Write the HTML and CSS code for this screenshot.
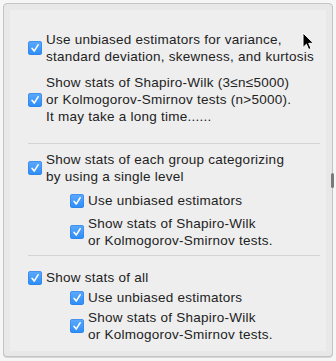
FILE: index.html
```html
<!DOCTYPE html>
<html lang="en">
  <head>
    <meta charset="UTF-8" />
    <meta name="viewport" content="width=device-width, initial-scale=1.0" />
    <title>Descriptive statistics options</title>
    <link rel="stylesheet" href="styles.css">
  </head>
  <body>
    <div class="hidden">
      <svg width="0" height="0">
        <symbol id="check" viewBox="0 0 14 14" fill="none" stroke="#fff" stroke-width="1.6" stroke-linecap="round" stroke-linejoin="round">
          <path d="M4 7.3l2.2 2.8 3.9-6.3"></path>
        </symbol>
      </svg>
    </div>

    <div class="frame">
      <div class="panel">
        <label class="option first">
          <span class="box"><svg><use xlink:href="#check"></use></svg></span>
          <span class="text">Use unbiased estimators for variance,<br>standard deviation, skewness, and kurtosis</span>
        </label>
        <label class="option second">
          <span class="box"><svg><use xlink:href="#check"></use></svg></span>
          <span class="text">Show stats of Shapiro-Wilk (3≤n≤5000)<br>or Kolmogorov-Smirnov tests (n&gt;5000).<br>It may take a long time......</span>
        </label>

        <hr class="sep sep-one">

        <label class="option">
          <span class="box"><svg><use xlink:href="#check"></use></svg></span>
          <span class="text">Show stats of each group categorizing<br>by using a single level</span>
        </label>
        <label class="option sub sub-a">
          <span class="box"><svg><use xlink:href="#check"></use></svg></span>
          <span class="text">Use unbiased estimators</span>
        </label>
        <label class="option sub sub-b">
          <span class="box"><svg><use xlink:href="#check"></use></svg></span>
          <span class="text">Show stats of Shapiro-Wilk<br>or Kolmogorov-Smirnov tests.</span>
        </label>

        <hr class="sep sep-two">

        <label class="option">
          <span class="box"><svg><use xlink:href="#check"></use></svg></span>
          <span class="text">Show stats of all</span>
        </label>
        <label class="option sub tight">
          <span class="box"><svg><use xlink:href="#check"></use></svg></span>
          <span class="text">Use unbiased estimators</span>
        </label>
        <label class="option sub tight">
          <span class="box"><svg><use xlink:href="#check"></use></svg></span>
          <span class="text">Show stats of Shapiro-Wilk<br>or Kolmogorov-Smirnov tests.</span>
        </label>
      </div>
      <span class="scroll-thumb"></span>
    </div>

    <svg class="cursor" viewBox="0 0 12 19" width="12" height="19">
      <path d="M1 1v14.5l3.4-3.3 2.3 5.3 2.3-1-2.3-5.2h4.8z" fill="#000" stroke="#fff" stroke-width="1" stroke-linejoin="round"></path>
    </svg>
  </body>
</html>
```

FILE: styles.css
```css
*,
*::before,
*::after {
  box-sizing: border-box;
  margin: 0;
  padding: 0;
}

body {
  width: 336px;
  height: 361px;
  overflow: hidden;
  background-color: #f6f6f6;
  color: #222;
  font-family: "Liberation Sans", Arial, sans-serif;
  font-size: 13.5px;
  letter-spacing: 0.25px;
  line-height: 17px;
  position: relative;
}

.hidden {
  display: none;
}

.frame {
  position: relative;
  margin: 3px;
  height: 354px;
  border: 1px solid #c4c4c4;
  border-radius: 4px;
  background-color: #e8e8e8;
  padding: 6px 6px 5px;
  box-shadow: 0 1px 0 #d6d6d6;
}

.panel {
  height: 100%;
  background-color: #eeeeee;
  padding: 21px 0 0 18px;
}

.option {
  display: flex;
  align-items: center;
  gap: 4px;
}

.second {
  margin-top: 9px;
}

.box {
  flex: none;
  width: 14px;
  height: 14px;
  border-radius: 3px;
  background: linear-gradient(#5eaafd, #2b8cf7);
  box-shadow: inset 0 0 0 0.5px #2a7fe0;
}

.box svg {
  display: block;
  width: 14px;
  height: 14px;
}

.sep {
  border: 0;
  border-top: 1px solid #d4d4d4;
  width: 292px;
}

.sep-one {
  margin: 18px 0 7px;
}

.sep-two {
  margin: 6px 0 13px;
}

.sub {
  padding-left: 42px;
}

.sub-a {
  margin-top: 7px;
}

.sub-b {
  margin-top: 6px;
}

.tight {
  margin-top: 3px;
}

.scroll-thumb {
  position: absolute;
  right: -2px;
  top: 169px;
  width: 3px;
  height: 15px;
  border-radius: 2px;
  background-color: #7a7a7a;
}

.cursor {
  position: absolute;
  left: 302px;
  top: 32px;
}
```
